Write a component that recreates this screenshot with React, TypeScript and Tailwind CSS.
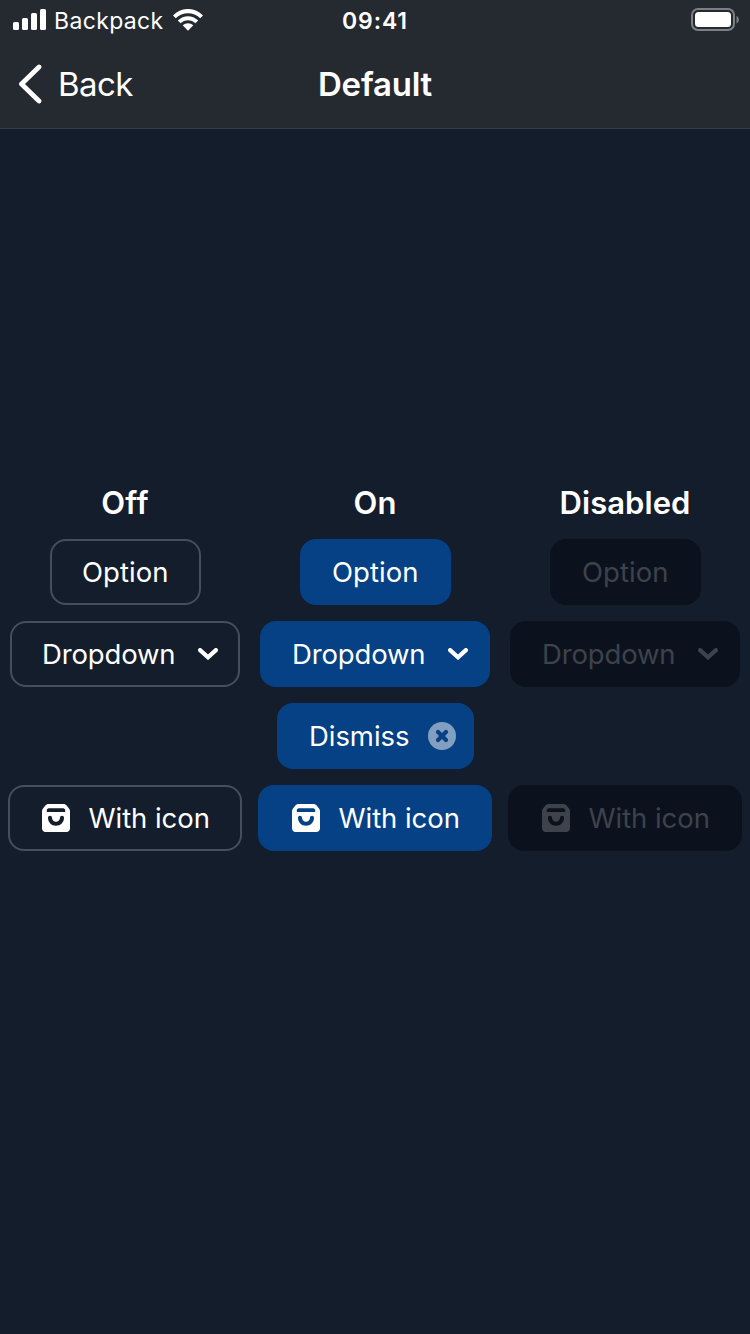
import React from "react";

type ChipState = "off" | "on" | "disabled";

const chipStyles: Record<ChipState, string> = {
  off: "border-2 border-[#444f5d] text-white",
  on: "border-2 border-[#054184] bg-[#054184] text-white",
  disabled: "border-2 border-[#0b121d] bg-[#0b121d] text-[#3d424b]",
};

function Chip({ state, className, children }: { state: ChipState; className: string; children: React.ReactNode }) {
  return (
    <button
      type="button"
      disabled={state === "disabled"}
      className={`flex h-[66px] shrink-0 items-center rounded-2xl text-[27.5px] leading-[34px] whitespace-nowrap ${chipStyles[state]} ${className}`}
    >
      {children}
    </button>
  );
}

function ChevronDown() {
  return (
    <svg width="20" height="12" viewBox="0 0 20 12" fill="none" className="ml-auto shrink-0">
      <path d="M2.1 2.1L10 9.3L17.9 2.1" stroke="currentColor" strokeWidth="4.2" strokeLinecap="round" strokeLinejoin="miter" />
    </svg>
  );
}

function BagIcon() {
  return (
    <svg width="28" height="28" viewBox="0 0 28 28" className="shrink-0">
      <path
        fill="currentColor"
        fillRule="evenodd"
        d="M7 0H21C22.8 0 24 .6 25 1.9L27 4.5C27.7 5.4 28 6.3 28 7.4V24.5C28 26.4 26.4 28 24.5 28H3.5C1.6 28 0 26.4 0 24.5V7.4C0 6.3 .3 5.4 1 4.5L3 1.9C4 .6 5.2 0 7 0ZM6.8 4.2C5.6 4.2 4.8 5.2 4.8 6.3V8H23.2V6.3C23.2 5.2 22.4 4.2 21.2 4.2ZM8 11.8C6.9 11.8 6 12.7 6 13.8C6 18.3 9.5 21.8 14 21.8S22 18.3 22 13.8C22 12.7 21.1 11.8 20 11.8S18 12.7 18 13.8C18 16.1 16.3 17.8 14 17.8S10 16.1 10 13.8C10 12.7 9.1 11.8 8 11.8Z"
      />
    </svg>
  );
}

function CloseCircle() {
  return (
    <svg width="28" height="28" viewBox="0 0 28 28" className="ml-auto shrink-0">
      <circle cx="14" cy="14" r="14" fill="#829fc1" />
      <path d="M10 10L18 18M18 10L10 18" stroke="#054184" strokeWidth="4.2" strokeLinecap="round" />
    </svg>
  );
}

function Column({ title, state, titleClass }: { title: string; state: ChipState; titleClass: string }) {
  return (
    <section className="flex w-[250px] flex-col items-center gap-4">
      <h2 className={`-mb-px h-10 text-[31px] leading-[37px] font-semibold ${titleClass}`}>{title}</h2>
      <Chip state={state} className="ml-px w-[151px] pl-[30px]">
        <span className="tracking-[0.05px]">Option</span>
      </Chip>
      <Chip state={state} className="w-[230px] pr-5 pl-[30px]">
        <span className="tracking-[-0.15px]">Dropdown</span>
        <ChevronDown />
      </Chip>
      {state === "on" ? (
        <Chip state={state} className="ml-px w-[197px] pr-4 pl-[30px]">
          <span className="tracking-[-0.05px]">Dismiss</span>
          <CloseCircle />
        </Chip>
      ) : (
        <div className="h-[66px]" />
      )}
      <Chip state={state} className="w-[234px] pl-8">
        <BagIcon />
        <span className="ml-[18.5px] tracking-[-0.06px]">With icon</span>
      </Chip>
    </section>
  );
}

function StatusBar() {
  return (
    <div className="grid h-10 grid-cols-3 items-center">
      <div className="flex items-center pl-[13px]">
        <svg width="33" height="22" viewBox="0 0 33 22" fill="white">
          <rect x="0" y="13" width="6" height="8" rx="1.5" />
          <rect x="9" y="9" width="6" height="12" rx="1.5" />
          <rect x="18" y="4" width="6" height="17" rx="1.5" />
          <rect x="27" y="0" width="6" height="21" rx="1.5" />
        </svg>
        <span className="ml-2 w-[110px] pt-[2px] text-[23px] leading-7 tracking-[0.35px]">Backpack</span>
        <svg width="30" height="22" viewBox="0 0 30 22" className="ml-[9px]" fill="white">
          <path d="M0 6.5C8.5-2.2 21.5-2.2 30 6.5L27.2 9.3C20.5 2.7 9.5 2.7 2.8 9.3Z" />
          <path d="M4.8 11.4C10.8 5.7 19.2 5.7 25.2 11.4L22.4 14.2C18.2 10.3 11.8 10.3 7.6 14.2Z" />
          <path d="M9.7 16.3C12.8 13.6 17.2 13.6 20.3 16.3L15 21.8Z" />
        </svg>
      </div>
      <span className="pt-[2px] text-center text-[23px] leading-7 font-semibold tracking-[0.9px]">09:41</span>
      <svg width="48" height="24" viewBox="0 0 48 24" className="mr-[11px] justify-self-end">
        <rect x="1" y="1" width="42" height="21" rx="6" fill="none" stroke="#7c7f83" strokeWidth="2" />
        <rect x="4" y="4" width="36" height="15" rx="3.5" fill="white" />
        <path d="M45.5 8C48.6 9.2 48.6 14.2 45.5 15.4Z" fill="#7c7f83" />
      </svg>
    </div>
  );
}

export default function App() {
  return (
    <main className="flex h-[1334px] w-[750px] flex-col bg-[#141d2b] font-['Inter','Liberation_Sans',sans-serif] text-white">
      <header className="h-[129px] border-b border-[#333e4d] bg-[#252a31]">
        <StatusBar />
        <nav className="grid h-[88px] grid-cols-3 items-center text-[33px] leading-10">
          <button type="button" className="flex items-center pl-[18px]">
            <svg width="24" height="40" viewBox="0 0 24 40" fill="none">
              <path d="M21 3L3.5 20L21 37" stroke="white" strokeWidth="4.8" strokeLinecap="round" strokeLinejoin="round" />
            </svg>
            <span className="ml-4 tracking-[-0.6px]">Back</span>
          </button>
          <h1 className="text-center font-semibold tracking-[-0.2px]">Default</h1>
        </nav>
      </header>
      <div className="flex pt-[355px]">
        <Column title="Off" state="off" titleClass="tracking-[0.3px]" />
        <Column title="On" state="on" titleClass="tracking-[0.2px]" />
        <Column title="Disabled" state="disabled" titleClass="tracking-[0.05px]" />
      </div>
    </main>
  );
}
